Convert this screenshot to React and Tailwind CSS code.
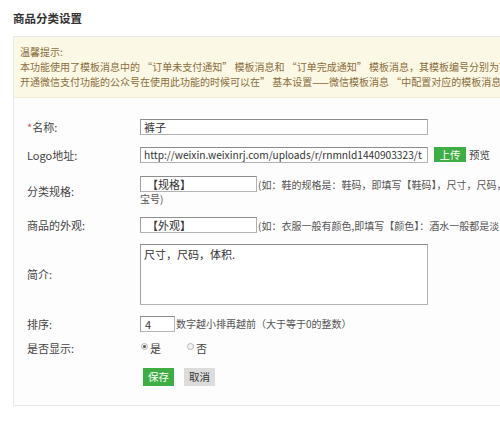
const inputCls =
  "h-[16px] box-border border border-[#b3b3b3] border-t-[#8c8c8c] border-l-[#a0a0a0] bg-white px-[3px] leading-[14px] text-[#333] whitespace-nowrap overflow-hidden";

const Row = ({ label, required, children, className = "" }) => (
  <div className={`flex items-center ${className}`}>
    <div className="w-[113px] shrink-0 text-[11px] text-[#444]">
      {required && <span className="text-[#d9534f]">*</span>}
      {label}
    </div>
    <div className="min-w-0">{children}</div>
  </div>
);

const Radio = ({ checked, label }) => (
  <span className="flex items-center gap-[2px]">
    <span className="w-[7px] h-[7px] rounded-full border border-[#b5b5b5] bg-[#f3f3f3] flex items-center justify-center -mt-[4px]">
      {checked && <span className="w-[3px] h-[3px] rounded-full bg-[#555]" />}
    </span>
    <span className="text-[11px] text-[#444]">{label}</span>
  </span>
);

export default function App() {
  return (
    <div
      className="w-full h-[421px] overflow-hidden bg-white"
      style={{ fontFamily: '"Noto Sans CJK SC", "Noto Sans", sans-serif' }}
    >
      <div className="w-[700px] pl-[13px]">
        <h1 className="pt-[10px] h-[36px] text-[11.5px] font-bold text-[#333] leading-[16px]">
          商品分类设置
        </h1>

        <div className="border border-[#e8e8e8] bg-[#fdfdfd] pb-[19px]">
          <div className="bg-[#fcf8e6] border-b border-[#f3ecd4] pl-[6px] pt-[7px] pb-[8px] text-[10px] leading-[15px] text-[#8a6d3b] whitespace-nowrap">
            <p>温馨提示:</p>
            <p>
              本功能使用了模板消息中的 “订单未支付通知” 模板消息和 “订单完成通知” 模板消息，其模板编号分别为TM00000
            </p>
            <p>
              开通微信支付功能的公众号在使用此功能的时候可以在” 基本设置——微信模板消息 “中配置对应的模板消息
            </p>
          </div>

          <div className="pl-[13px] pt-[21px]">
            <Row label="名称:" required>
              <div className={`${inputCls} w-[288px] text-[11px]`}>裤子</div>
            </Row>

            <Row label="Logo地址:" className="mt-[11px]">
              <div className="flex items-center">
                <div className={`${inputCls} w-[288px] text-[10.2px]`}>
                  http://weixin.weixinrj.com/uploads/r/rnmnld1440903323/t
                </div>
                <span className="ml-[6px] w-[32px] h-[15px] bg-[#3dad44] text-white text-[10.5px] leading-[15px] text-center">
                  上传
                </span>
                <span className="ml-[3px] text-[10.5px] text-[#444]">预览</span>
              </div>
            </Row>

            <Row label="分类规格:" className="mt-[13px]">
              <div className="flex items-center whitespace-nowrap">
                <div className={`${inputCls} w-[117px] pl-[6px] text-[11px]`}>【规格】</div>
                <span className="ml-[1px] text-[10px] text-[#555]">
                  (如：鞋的规格是：鞋码，即填写【鞋码】，尺寸，尺码，体积，如手机的规格是：内存
                </span>
              </div>
              <div className="text-[10px] leading-[14px] text-[#555]">宝号)</div>
            </Row>

            <Row label="商品的外观:" className="mt-[11px]">
              <div className="flex items-center whitespace-nowrap">
                <div className={`${inputCls} w-[117px] pl-[6px] text-[11px]`}>【外观】</div>
                <span className="ml-[1px] text-[10px] text-[#555]">
                  (如：衣服一般有颜色,即填写【颜色】：酒水一般都是淡香，浓香
                </span>
              </div>
            </Row>

            <Row label="简介:" className="mt-[10px]">
              <div className="w-[288px] h-[61px] box-border border border-[#b3b3b3] border-t-[#8c8c8c] border-l-[#a0a0a0] bg-white px-[3px] pt-[2px] text-[11px] leading-[14px] text-[#333]">
                尺寸，尺码，体积.
              </div>
            </Row>

            <Row label="排序:" className="mt-[11px]">
              <div className="flex items-center whitespace-nowrap">
                <div className={`${inputCls} w-[35px] pl-[4px] text-[11px]`}>4</div>
                <span className="ml-[1px] text-[10px] text-[#555]">
                  数字越小排再越前（大于等于0的整数）
                </span>
              </div>
            </Row>

            <Row label="是否显示:" className="mt-[9px] h-[14px]">
              <div className="flex items-center gap-[26px] pl-[1px]">
                <Radio checked label="是" />
                <Radio label="否" />
              </div>
            </Row>

            <div className="flex items-center mt-[13px] pl-[116px] gap-[10px]">
              <span className="w-[31px] h-[18px] bg-[#3dad44] text-white text-[10.5px] leading-[18px] text-center">
                保存
              </span>
              <span className="w-[31px] h-[18px] bg-[#dcdcdc] text-[#333] text-[10.5px] leading-[18px] text-center">
                取消
              </span>
            </div>
          </div>
        </div>
      </div>
    </div>
  );
}
